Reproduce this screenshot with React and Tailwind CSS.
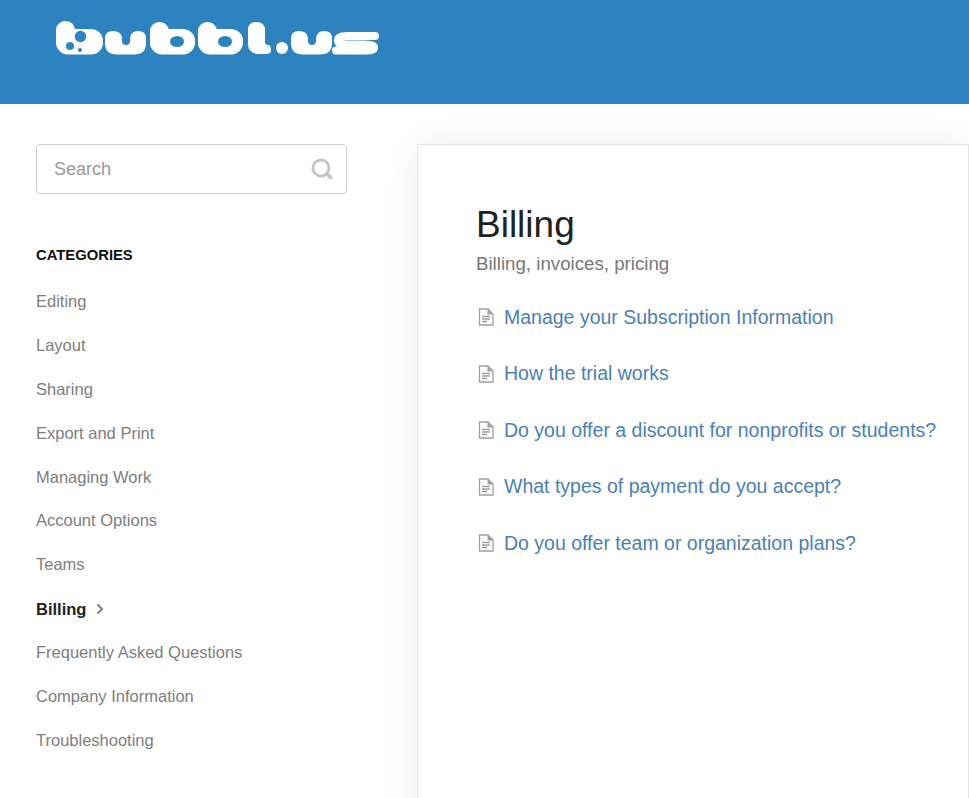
import { ChevronRight } from "lucide-react";

const categories = [
  "Editing",
  "Layout",
  "Sharing",
  "Export and Print",
  "Managing Work",
  "Account Options",
  "Teams",
  "Billing",
  "Frequently Asked Questions",
  "Company Information",
  "Troubleshooting",
];

const articles = [
  "Manage your Subscription Information",
  "How the trial works",
  "Do you offer a discount for nonprofits or students?",
  "What types of payment do you accept?",
  "Do you offer team or organization plans?",
];

const BLUE = "#2d83bf";

// one fat "b" of the wordmark
const LogoB = ({ x, w }) => (
  <g>
    <rect x={x} y="22" width="19" height="30" rx="9" fill="#fff" />
    <rect x={x} y="29" width={w} height="25.5" rx="12" fill="#fff" />
    <ellipse cx={x + w - 18} cy="41.5" rx="7" ry="5.5" fill={BLUE} />
  </g>
);

const LogoU = ({ x }) => (
  <path
    transform={`translate(${x} 0)`}
    d="M0 38Q0 31 8 31Q16 31 17 38V41Q17 45 21 45Q25 45 25 41V38Q26 31 33 31Q41 31 41 38V43Q41 54.5 29 54.5H12Q0 54.5 0 43Z"
    fill="#fff"
  />
);

const Logo = () => (
  <svg width="330" height="40" viewBox="52 18 330 40" className="block">
    <rect x="56" y="21" width="19" height="30" rx="9" fill="#fff" />
    <rect x="56" y="29" width="47" height="25.5" rx="12" fill="#fff" />
    <circle cx="80.5" cy="36.5" r="5.7" fill={BLUE} />
    <circle cx="70" cy="46" r="4" fill={BLUE} />
    <circle cx="80" cy="50" r="2.1" fill={BLUE} />
    <LogoU x={105} />
    <LogoB x={150} w={45} />
    <LogoB x={198} w={45} />
    <path
      d="M248 30Q248 22 256 22Q265 22 265 30V42Q265 45 268 45Q271 45 271 50Q271 54 266 54H260Q248 54 248 44Z"
      fill="#fff"
    />
    <circle cx="282" cy="48" r="6" fill="#fff" />
    <LogoU x={291} />
    <path
      d="M375 36H347Q338 36 338 40.5Q338 44.5 347 44.5H365Q374 44.5 374 47.5Q374 51 365 50.5H336"
      fill="none"
      stroke="#fff"
      strokeWidth="8"
      strokeLinecap="round"
      strokeLinejoin="round"
    />
  </svg>
);

const DocIcon = () => (
  <svg width="16" height="18" viewBox="0 0 16 18" className="shrink-0">
    <path d="M1.5 1H10L15 6V17H1.5Z" fill="#fff" stroke="#a0a0a0" strokeWidth="1.3" />
    <path d="M9.5 1V6.5H15Z" fill="#a0a0a0" />
    <path d="M4 8.5H12M4 11H12M4 13.5H9" stroke="#a0a0a0" strokeWidth="1.3" />
  </svg>
);

export default function App() {
  return (
    <div className="h-[798px] overflow-hidden bg-white font-['Liberation_Sans',Arial,sans-serif]">
      {/* Header */}
      <header className="h-[104px] bg-[#2d83bf] pl-[52px] pt-[18px]">
        <Logo />
      </header>

      <div className="flex pl-9 pt-10">
        {/* Sidebar */}
        <aside className="w-[311px] shrink-0">
          <div className="flex h-[50px] items-center justify-between rounded border border-[#ccc] pl-[17px] pr-[13px]">
            <span className="text-[18px] text-[#999]">Search</span>
            <svg width="22" height="22" viewBox="0 0 22 22" fill="none" stroke="#c4c4c4" strokeLinecap="round">
              <circle cx="10" cy="10" r="8" strokeWidth="2.8" />
              <path d="M16 16l3.6 3.6" strokeWidth="3.6" />
            </svg>
          </div>

          <h3 className="mt-[51px] text-[14.8px] leading-5 font-bold text-[#111]">CATEGORIES</h3>

          <ul className="mt-[14.6px]">
            {categories.map((name) => (
              <li key={name} className="flex h-[43.85px] items-center">
                {name === "Billing" ? (
                  <span className="flex items-center gap-[6px] pt-[2px] text-[16.5px] font-bold text-[#222]">
                    {name}
                    <ChevronRight size={16} strokeWidth={3.5} className="text-[#8a8a8a]" />
                  </span>
                ) : (
                  <span className="text-[16.5px] text-[#7e7e7e]">{name}</span>
                )}
              </li>
            ))}
          </ul>
        </aside>

        {/* Article list */}
        <main className="relative ml-[70px] h-[700px] flex-1 border border-[#e5e5e5] bg-white pl-[58px] pt-[55px] shadow-[0_0_40px_rgba(0,0,0,0.07)]">
          <h1 className="text-[37px] leading-[50px] text-[#222]">Billing</h1>
          <p className="text-[18.7px] leading-7 text-[#777]">Billing, invoices, pricing</p>
          <ul className="mt-[11px]">
            {articles.map((title) => (
              <li key={title} className="flex h-[56.5px] items-center gap-[10px] pl-[2px] text-[19.5px] whitespace-nowrap text-[#4a7fb8]">
                <DocIcon />
                {title}
              </li>
            ))}
          </ul>
        </main>
      </div>
    </div>
  );
}
